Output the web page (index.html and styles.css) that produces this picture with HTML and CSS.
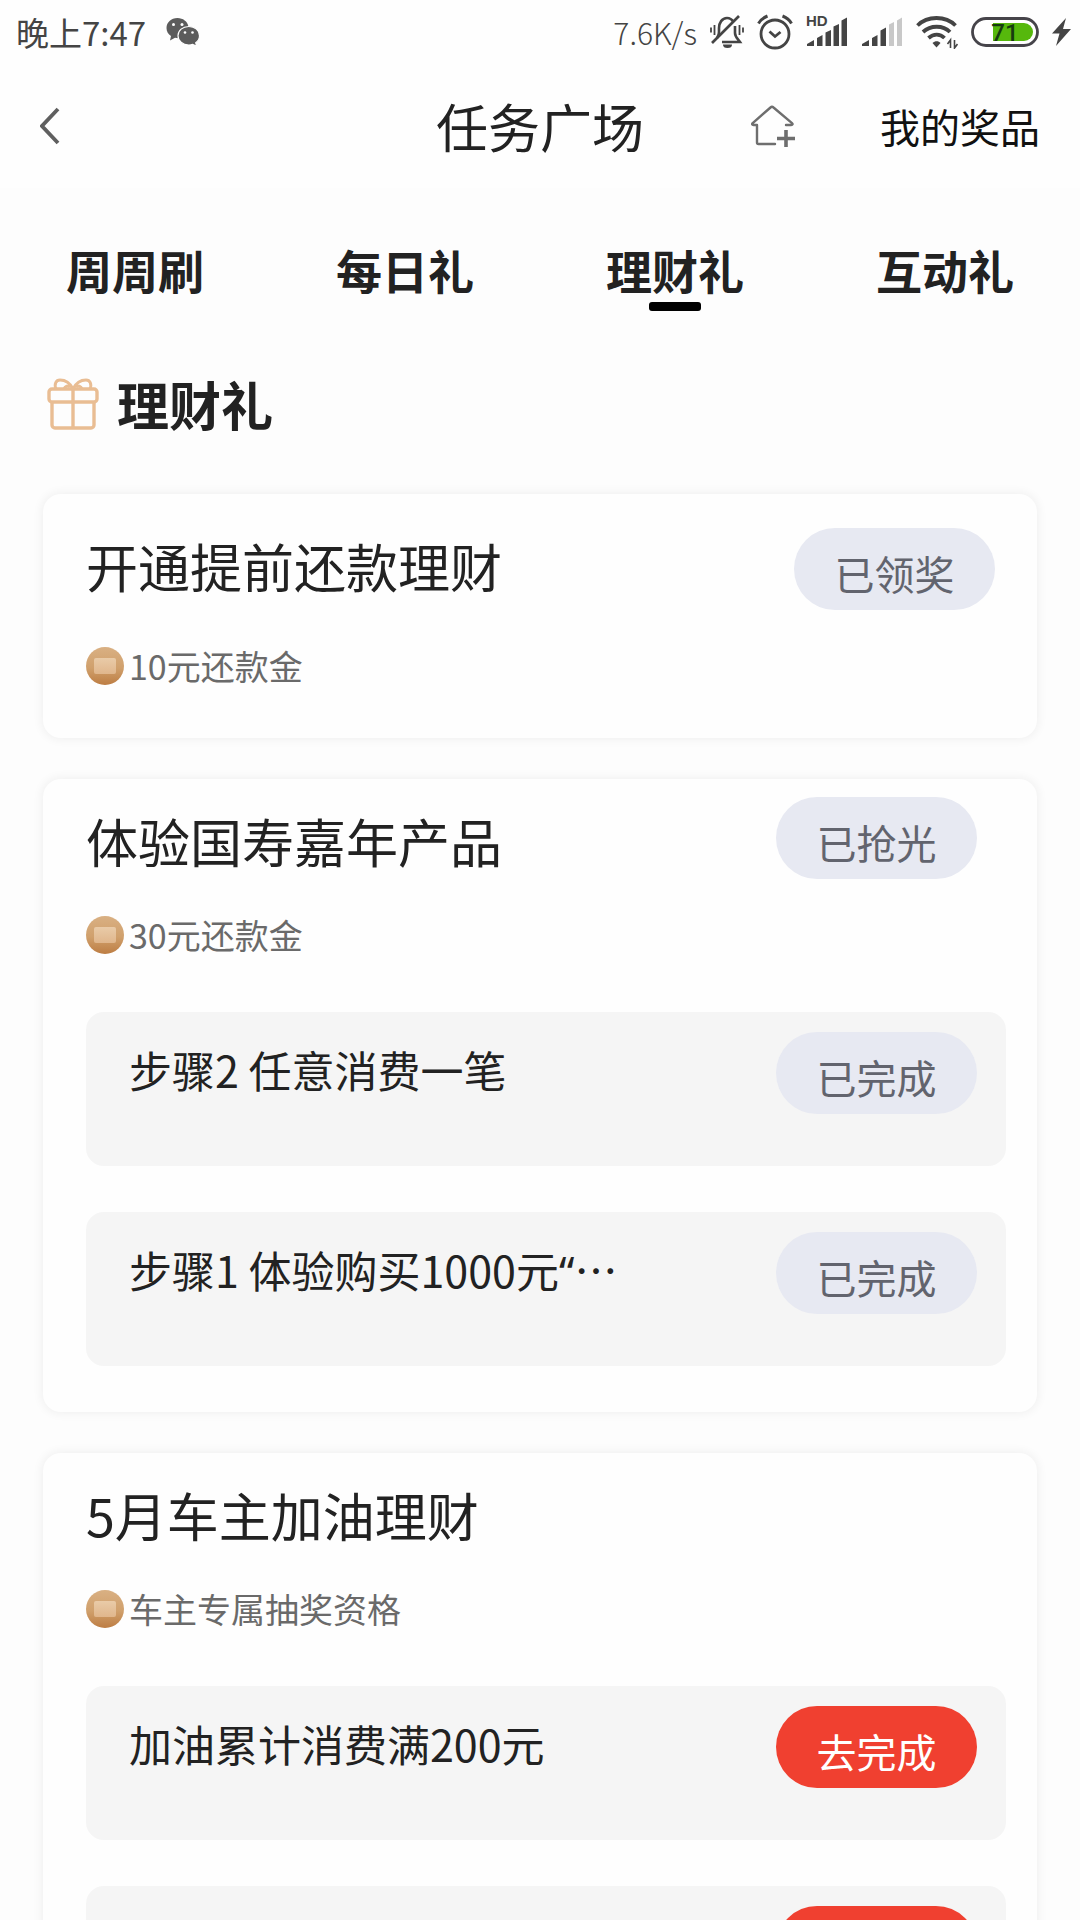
FILE: index.html
```html
<!DOCTYPE html>
<html lang="zh-CN">
<head>
    <meta charset="UTF-8">
    <meta name="viewport" content="width=device-width, initial-scale=1.0">
    <title>任务广场</title>
    <link rel="stylesheet" href="styles.css">
</head>
<body>
    <!-- 状态栏 -->
    <div class="status-bar">
        <div class="status-left">
            <span class="clock">晚上7:47</span>
            <svg width="34" height="30" viewBox="0 0 34 30">
                <path d="M11.500 1C5 1 0.500 5.500 0.500 11c0 3.500 1.800 6.300 4.500 8l-1 4.500 5-2.700c4 .8 7 .2 9.500-1.300C23 17.500 23 12 22.500 9.500 21.500 4.500 17 1 11.500 1z" fill="#5c5c5c"/>
                <path d="M22.800 9.500c-6.200 0-10.800 4-10.800 9.200S16.600 28 22.800 28c1.400 0 2.700-.2 3.900-.6l4 2-1-3.700c2.400-1.700 3.800-4.200 3.800-7 0-5.200-4.500-9.200-10.700-9.200z" fill="#5c5c5c" stroke="#fff" stroke-width="1.200"/>
                <circle cx="7.500" cy="7.500" r="1.500" fill="#fff"/>
                <circle cx="16" cy="7.500" r="1.500" fill="#fff"/>
                <circle cx="19" cy="15.500" r="1.300" fill="#fff"/>
                <circle cx="26.500" cy="15.500" r="1.300" fill="#fff"/>
            </svg>
        </div>
        <div class="status-right">
            <span class="speed">7.6K/s</span>
            <svg width="34" height="34" viewBox="0 0 34 34" fill="none" stroke="#444" stroke-width="2.600">
                <path d="M7 23c1-2 2-3 2-6v-4c0-5 3-10 8-10 3 0 5 1.500 6.500 4M25 11v7c0 4 3 6 5 9H12"/>
                <path d="M29 1L2 28"/>
                <path d="M4.500 10v10M1 12.500v5M29.500 10v10M33 12.500v5" stroke-width="1.800"/>
                <path d="M13 29.500a4.500 3.500 0 0 0 9 0z" fill="#444" stroke="none"/>
            </svg>
            <svg width="36" height="36" viewBox="0 0 36 36" fill="none" stroke="#444" stroke-width="2.800">
                <circle cx="18" cy="20" r="14"/>
                <path d="M12.500 17.500L18 22.500l5.500-4.500"/>
                <path d="M1.500 9.500C3.500 6 6.500 3.500 10.500 2M25.500 2c4 1.500 7 4 9 7.500" stroke-width="3"/>
            </svg>
            <svg width="42" height="38" viewBox="0 -2 42 38">
                <path d="M1 31v-2l7-4v6zM11 31v-8l5.500-3v11zM19.500 31V17.500l5.500-2.500v16zM27.500 31V11.500l5.500-2.500v22zM35.500 31V5.500l5.500-3V31z" fill="#444"/>
                <text x="0" y="11" class="hd-text">HD</text>
            </svg>
            <svg width="42" height="34" viewBox="0 0 42 34">
                <path d="M1 31v-2l7-4v6zM11 31v-8l5.500-3v11zM19.500 31V15.500l5.500-3V31z" fill="#444"/>
                <path d="M28 31V9.500L33 7v24zM36 31V5.500l5-3V31z" fill="#c8c8c8"/>
            </svg>
            <svg width="42" height="34" viewBox="0 0 42 34" fill="none" stroke="#444" stroke-width="3.800">
                <path d="M1.500 10.500c10-10 28-10 38 0M7 17c7.500-7 20-7 27 0M12.500 23c5-4.500 11.500-4.500 16 0"/>
                <path d="M16.500 28c2.500-2.500 6-2.500 8 0l-4 4.500z" fill="#444" stroke="none"/>
                <path d="M34.500 33v-8l-3 4M38.500 25v8l3-4" stroke-width="1.600"/>
            </svg>
            <svg width="68" height="32" viewBox="0 0 68 32">
                <rect x="1.500" y="2.500" width="65" height="27" rx="13.500" fill="#fff" stroke="#46444a" stroke-width="2.800"/>
                <path d="M22 7h31a9 9 0 0 1 0 18H22z" fill="#56b80c"/>
                <text x="34" y="25" class="battery-text">71</text>
            </svg>
            <svg width="19" height="28" viewBox="0 0 19 28">
                <path d="M14 0L0 15.500h7.500L4 28l15-17h-8z" fill="#444"/>
            </svg>
        </div>
    </div>

    <header class="header">
        <button class="back" aria-label="返回">
            <svg width="22" height="38" viewBox="0 0 22 38" fill="none" stroke="#5f5f5f" stroke-width="3.800">
                <path d="M18 2L2 19l16 17"/>
            </svg>
        </button>
        <h1>任务广场</h1>
        <div class="header-right">
            <button class="home" aria-label="添加到首页">
                <svg width="44" height="42" viewBox="0 0 44 42" fill="none" stroke="#6e6e6e" stroke-width="2.400" stroke-linecap="round" stroke-linejoin="round">
                    <path d="M24 39H7.500a1.500 1.500 0 0 1-1.500-1.500V20H2.500c-1.500 0-1.800-1-.8-1.900L19.500 2.500c1-.9 2-.9 3 0L41 18.100c1 .9.700 1.900-.8 1.900H35"/>
                    <path d="M35 25v17M26 33.500h18" stroke-width="3.600" stroke-linecap="butt"/>
                </svg>
            </button>
            <a href="#prizes">我的奖品</a>
        </div>
    </header>

    <main class="content">
        <nav class="tabs">
            <a href="#week">周周刷</a>
            <a href="#day">每日礼</a>
            <a href="#finance" class="active">理财礼</a>
            <a href="#play">互动礼</a>
        </nav>

        <div class="section-title" id="finance">
            <svg width="52" height="52" viewBox="0 0 52 52" fill="none" stroke="#e9bd93" stroke-width="3.400">
                <rect x="2" y="11" width="48" height="13" rx="3"/>
                <path d="M5 24v23a3 3 0 0 0 3 3h36a3 3 0 0 0 3-3V24M26 11v39"/>
                <path d="M26 11C23 5 18 2 13 2c-4 0-6 4-4 9M26 11c3-6 8-9 13-9 4 0 6 4 4 9M17 11c1-3 4-4 6-2M35 11c-1-3-4-4-6-2" stroke-width="3"/>
            </svg>
            <h2>理财礼</h2>
        </div>

        <section class="card single">
            <div class="card-head">
                <h3>开通提前还款理财</h3>
                <button class="pill">已领奖</button>
            </div>
            <div class="reward"><span class="coin"></span>10元还款金</div>
        </section>

        <section class="card">
            <div class="card-head">
                <h3>体验国寿嘉年产品</h3>
                <button class="pill">已抢光</button>
            </div>
            <div class="reward"><span class="coin"></span>30元还款金</div>
            <div class="steps">
                <div class="step">
                    <p>步骤2 任意消费一笔</p>
                    <button class="pill">已完成</button>
                </div>
                <div class="step">
                    <p>步骤1 体验购买1000元<span class="quote">“</span>…</p>
                    <button class="pill">已完成</button>
                </div>
            </div>
        </section>

        <section class="card">
            <div class="card-head">
                <h3>5月车主加油理财</h3>
            </div>
            <div class="reward"><span class="coin"></span>车主专属抽奖资格</div>
            <div class="steps">
                <div class="step">
                    <p>加油累计消费满200元</p>
                    <button class="pill go">去完成</button>
                </div>
                <div class="step">
                    <button class="pill go" aria-label="去完成"></button>
                </div>
            </div>
        </section>
    </main>
</body>
</html>
```
FILE: styles.css
```css
* {
    box-sizing: border-box;
}
body {
    margin: 0;
    height: 100vh;
    display: flex;
    flex-direction: column;
    overflow: hidden;
    font-family: "Noto Sans CJK SC", sans-serif;
    color: #222;
    background-color: #fdfdfd;
}
h1, h2, h3, p {
    margin: 0;
    font-weight: normal;
}
a {
    color: inherit;
    text-decoration: none;
}
button {
    padding: 0;
    border: none;
    background: none;
    font-family: inherit;
    cursor: pointer;
}
svg {
    display: block;
    flex: none;
}

/* 状态栏 */
.status-bar {
    display: flex;
    justify-content: space-between;
    height: 64px;
    padding: 0 9px 0 16px;
    background-color: #fefefe;
    color: #444;
    flex: none;
}
.status-left, .status-right {
    display: flex;
    align-items: center;
    gap: 13px;
}
.status-left {
    gap: 20px;
}
.clock {
    font-size: 33px;
    line-height: 64px;
}
.speed {
    font-size: 30px;
    font-weight: 300;
    line-height: 64px;
}
.hd-text {
    font-family: "Liberation Sans", sans-serif;
    font-size: 15px;
    font-weight: bold;
    fill: #444;
}
.battery-text {
    font-family: Roboto, sans-serif;
    font-size: 24px;
    font-weight: 500;
    text-anchor: middle;
    fill: #173c10;
}

/* 顶部导航 */
.header {
    display: grid;
    grid-template-columns: 1fr auto 1fr;
    align-items: center;
    height: 124px;
    padding: 0 40px;
    background-color: #fefefe;
    flex: none;
}
.back {
    justify-self: start;
}
.header h1 {
    font-size: 52px;
    line-height: 76px;
}
.header-right {
    display: flex;
    align-items: center;
    justify-content: flex-end;
    gap: 85px;
    font-size: 40px;
    color: #111;
}

.content {
    flex: 1;
    overflow-y: auto;
    scrollbar-width: none;
}
.tabs {
    display: grid;
    grid-template-columns: repeat(4, 1fr);
    padding-top: 47px;
    text-align: center;
}
.tabs a {
    position: relative;
    font-size: 46px;
    font-weight: bold;
    line-height: 68px;
}
.tabs .active::after {
    content: "";
    position: absolute;
    left: 50%;
    bottom: -8px;
    width: 52px;
    height: 9px;
    margin-left: -26px;
    border-radius: 3px;
    background-color: #000;
}
.section-title {
    display: flex;
    align-items: center;
    gap: 18px;
    margin: 70px 47px 59px;
}
.section-title h2 {
    font-size: 52px;
    font-weight: bold;
    line-height: 62px;
}

/* 任务卡片 */
.card {
    margin: 0 43px 41px;
    padding: 22px 31px 46px 43px;
    border-radius: 18px;
    background-color: #fefefe;
    box-shadow: 0 0 10px 2px rgba(0, 0, 0, 0.05);
}
.card-head {
    display: flex;
    justify-content: space-between;
    align-items: flex-start;
}
.card-head h3 {
    font-size: 52px;
    line-height: 80px;
}
.card-head .pill {
    margin: -4px 29px 0 0;
}
.single {
    padding-top: 32px;
    padding-bottom: 52px;
}
.single .card-head .pill {
    margin: 2px 11px 0 0;
}
.single .reward {
    margin-top: 36px;
}
.pill {
    width: 201px;
    height: 82px;
    padding-top: 8px;
    border-radius: 41px;
    background-color: #e7e9f2;
    color: #62646e;
    font-size: 40px;
    flex: none;
}
.go {
    margin-left: auto;
    background-color: #f04030;
    color: #fff;
}
.reward {
    display: flex;
    align-items: center;
    gap: 5px;
    margin-top: 34px;
    font-size: 34px;
    line-height: 40px;
    color: #6a6a6a;
}
.coin {
    display: flex;
    align-items: center;
    justify-content: center;
    width: 38px;
    height: 38px;
    border-radius: 50%;
    background: linear-gradient(#d9b083, #d0a06c 55%, #bd7d43);
}
.coin::before {
    content: "";
    width: 22px;
    height: 16px;
    border-radius: 2px;
    background: linear-gradient(#e9cba8, #e0b68c);
}
.steps {
    display: grid;
    gap: 46px;
    margin-top: 57px;
}
.step {
    display: flex;
    justify-content: space-between;
    align-items: flex-start;
    min-height: 154px;
    padding: 20px 29px 0 43px;
    border-radius: 18px;
    background-color: #f5f5f5;
}
.step p {
    font-size: 43px;
    line-height: 74px;
}
.quote {
    font-family: "Noto Sans", sans-serif;
}
```
